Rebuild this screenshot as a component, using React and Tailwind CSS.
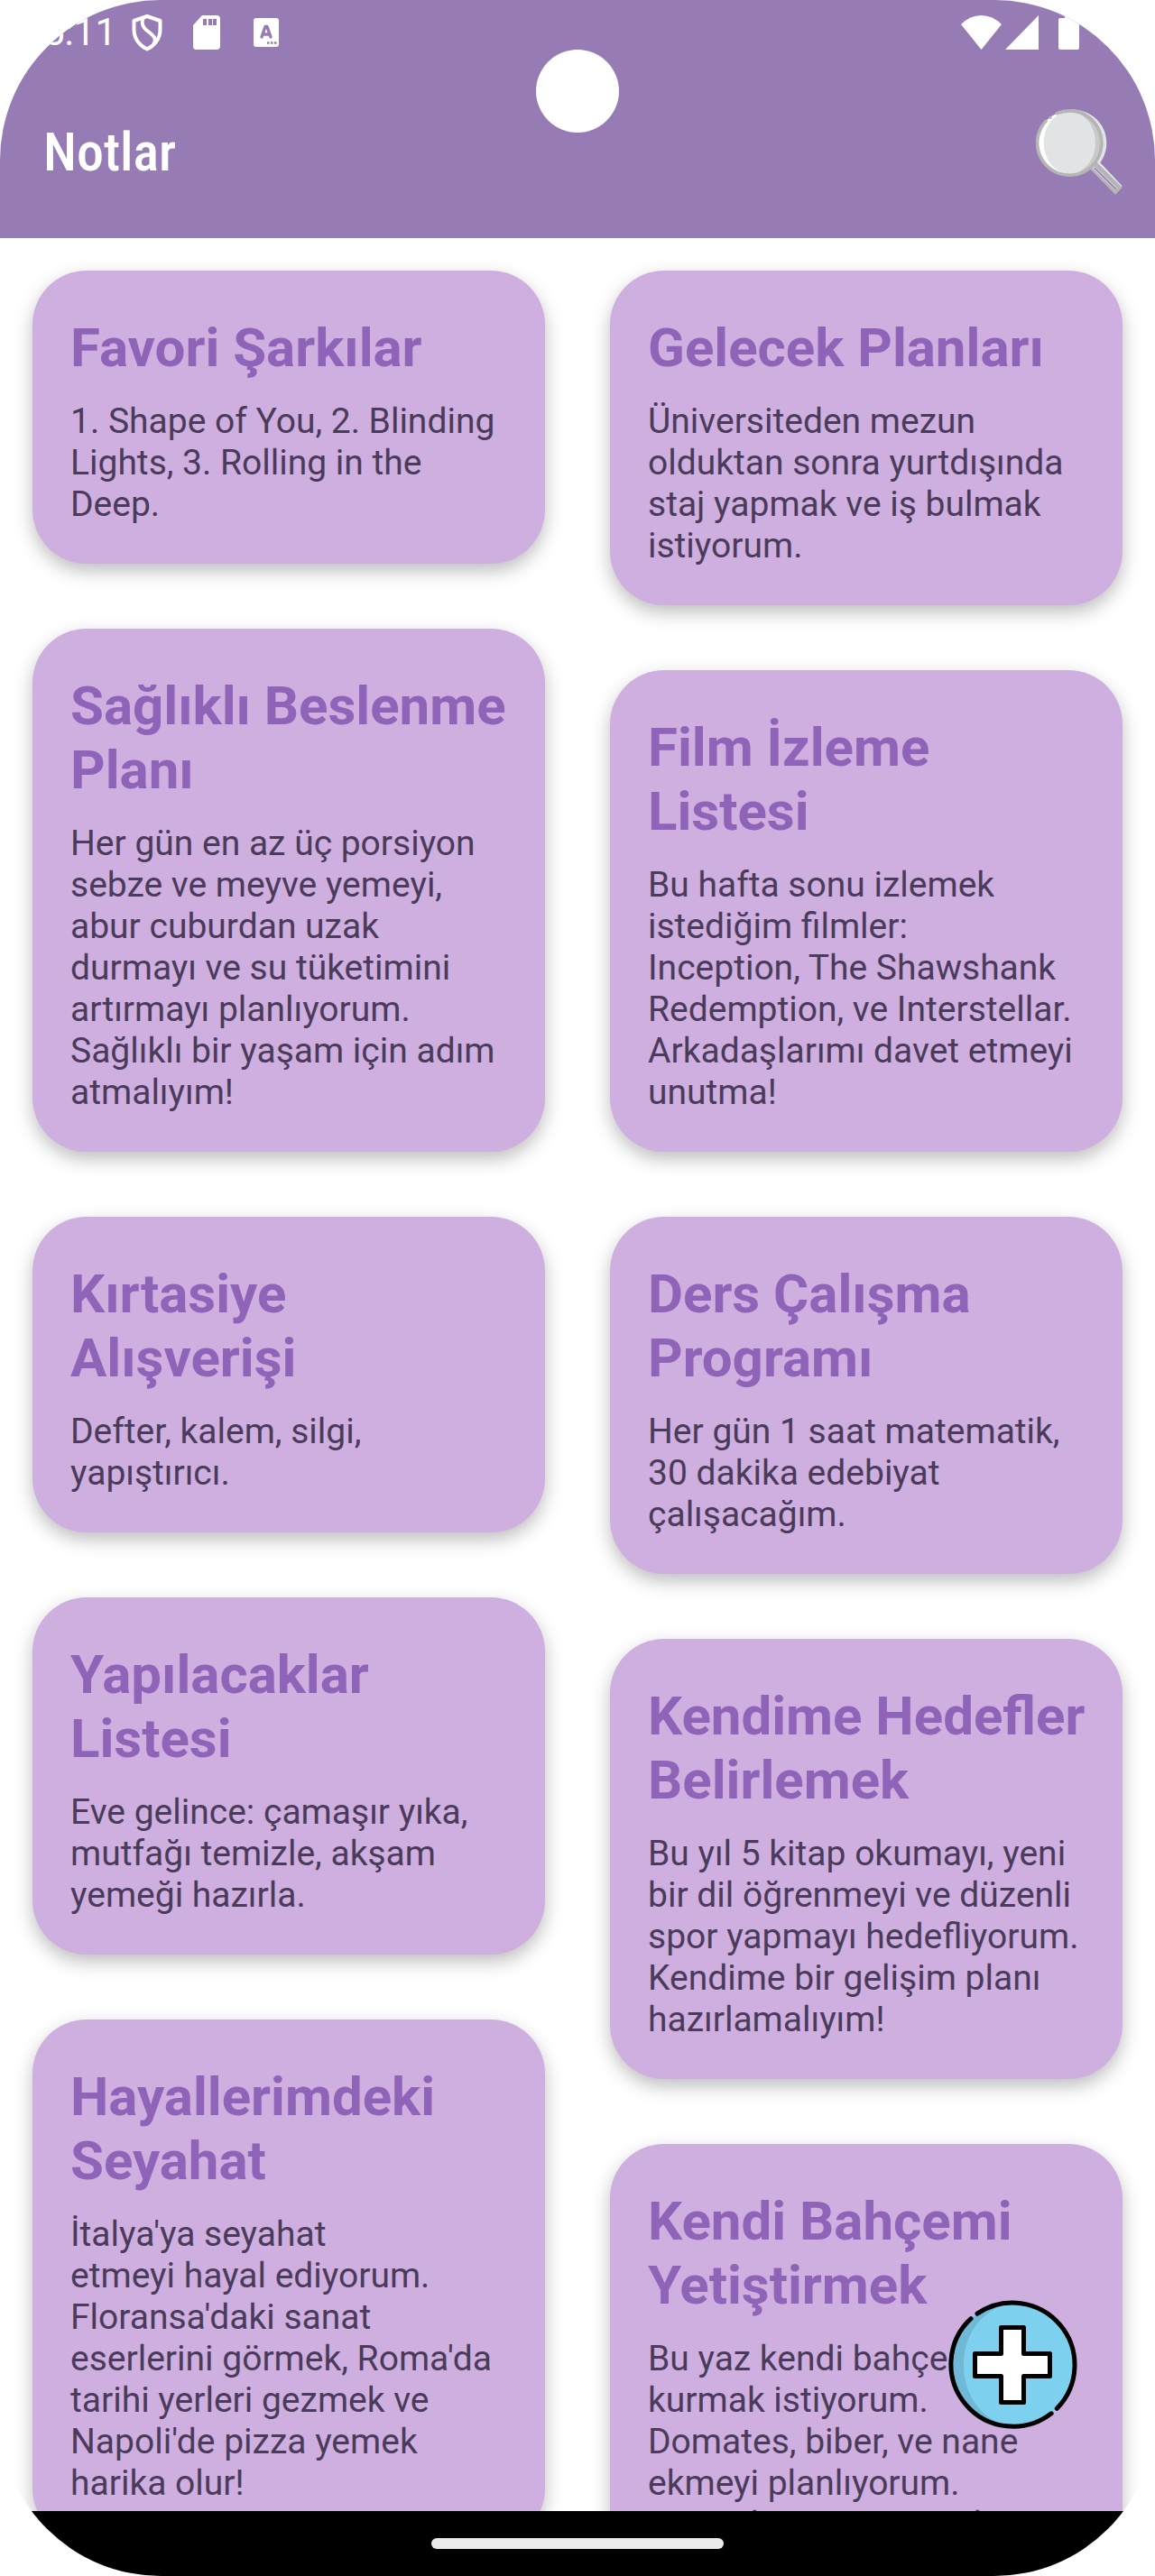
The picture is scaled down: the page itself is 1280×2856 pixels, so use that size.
const leftNotes = [
  { title: "Favori Şarkılar", lines: ["1. Shape of You, 2. Blinding Lights, 3. Rolling in the Deep."] },
  {
    title: "Sağlıklı Beslenme Planı",
    lines: [
      "Her gün en az üç porsiyon sebze ve meyve yemeyi, abur cuburdan uzak durmayı ve su tüketimini artırmayı planlıyorum. Sağlıklı bir yaşam için adım atmalıyım!",
    ],
  },
  { title: "Kırtasiye Alışverişi", lines: ["Defter, kalem, silgi, yapıştırıcı."] },
  { title: "Yapılacaklar Listesi", lines: ["Eve gelince: çamaşır yıka, mutfağı temizle, akşam yemeği hazırla."] },
  {
    title: "Hayallerimdeki Seyahat",
    lines: [
      "İtalya'ya seyahat",
      "etmeyi hayal ediyorum. Floransa'daki sanat eserlerini görmek, Roma'da tarihi yerleri gezmek ve Napoli'de pizza yemek harika olur!",
    ],
  },
];

const rightNotes = [
  { title: "Gelecek Planları", lines: ["Üniversiteden mezun olduktan sonra yurtdışında staj yapmak ve iş bulmak istiyorum."] },
  {
    title: "Film İzleme Listesi",
    lines: [
      "Bu hafta sonu izlemek istediğim filmler:",
      "Inception, The Shawshank Redemption, ve Interstellar. Arkadaşlarımı davet etmeyi unutma!",
    ],
  },
  { title: "Ders Çalışma Programı", lines: ["Her gün 1 saat matematik, 30 dakika edebiyat çalışacağım."] },
  {
    title: "Kendime Hedefler Belirlemek",
    lines: [
      "Bu yıl 5 kitap okumayı, yeni bir dil öğrenmeyi ve düzenli spor yapmayı hedefliyorum. Kendime bir gelişim planı hazırlamalıyım!",
    ],
  },
  {
    title: "Kendi Bahçemi Yetiştirmek",
    lines: [
      "Bu yaz kendi bahçemi kurmak istiyorum.",
      "Domates, biber, ve nane ekmeyi planlıyorum.",
      "Organik tarım yapmak istiyorum.",
    ],
  },
];

function NoteCard({ note }) {
  return (
    <article className="rounded-[60px] bg-[#ceafdf] pt-[50px] pr-[36px] pb-[43px] pl-[42px] shadow-[0_8px_20px_rgba(0,0,0,0.26)]">
      <h2 className="text-[60px] leading-[71px] font-bold text-[#8f64b8]">{note.title}</h2>
      <div className="mt-[23px] text-[39px] leading-[46px] text-[#4b3b5b]">
        {note.lines.map((line) => (
          <p key={line}>{line}</p>
        ))}
      </div>
    </article>
  );
}

function NoteColumn({ notes }) {
  return (
    <div className="flex min-w-0 flex-1 flex-col gap-[72px]">
      {notes.map((note) => (
        <NoteCard key={note.title} note={note} />
      ))}
    </div>
  );
}

function StatusBar() {
  return (
    <div className="flex h-[72px] items-center pr-[84px] pl-[48px] text-white">
      <span className="w-[76px] text-[42px] leading-[72px]">5:11</span>
      <svg className="ml-[22px] h-[42px] w-[34px]" viewBox="0 0 34 42" fill="none" stroke="currentColor" strokeWidth="4" aria-hidden="true">
        <path d="M17 3 L31.500 8 V18 C31.500 28 25 36 17 39.500 C9 36 2.500 28 2.500 18 V8 Z" strokeLinejoin="round" />
        <path d="M13 4 C10 11 12 15 17 19 C25 25 28 28 24 34" />
      </svg>
      <svg className="ml-[33px] h-[38px] w-[32px]" viewBox="0 0 32 38" fill="currentColor" aria-hidden="true">
        <path fillRule="evenodd" d="M11 0 H27 Q31 0 31 4 V34 Q31 38 27 38 H4 Q1 38 1 34 V11 Z M12 4 V11 H16 V4 Z M18 4 V11 H22 V4 Z M23 4 V11 H27 V4 Z" />
      </svg>
      <svg className="ml-[36px] h-[32px] w-[28px]" viewBox="0 0 28 32" aria-hidden="true">
        <rect width="28" height="32" rx="3" fill="currentColor" />
        <path d="M9 21 L13 9.500 H15 L19 21 M10.500 18 H17.500" fill="none" stroke="#977bb5" strokeWidth="3.4" strokeLinecap="round" strokeLinejoin="round" />
        <path d="M15 27.500 H17.500 M19 27.500 H21.500 M23 27.500 H25.500" stroke="#977bb5" strokeWidth="2.4" />
      </svg>
      <div className="ml-auto flex items-center">
        <svg className="h-[38px] w-[45px]" viewBox="0 0 45 38" fill="currentColor" aria-hidden="true">
          <path d="M0 10 Q10 0 22.500 0 Q35 0 45 10 L22.500 38 Z" />
        </svg>
        <svg className="ml-[4px] h-[38px] w-[37px]" viewBox="0 0 37 38" fill="currentColor" aria-hidden="true">
          <path d="M37 0 V38 H0 Z" />
        </svg>
        <svg className="ml-[22px] h-[38px] w-[23px]" viewBox="0 0 23 38" fill="currentColor" aria-hidden="true">
          <path d="M7 0 H16 V3 H21 Q23 3 23 5 V36 Q23 38 21 38 H2 Q0 38 0 36 V5 Q0 3 2 3 H7 Z" />
        </svg>
      </div>
    </div>
  );
}

function MagnifierIcon() {
  return (
    <svg className="size-[96px]" viewBox="84 62 288 288" fill="none" aria-hidden="true">
      <path d="M205 63 C270 66 319 112 319 174 C319 200 311 222 298 240 L371 318 L358 332 L270 250 Z" fill="#e1e3e5" />
      <circle cx="196" cy="174" r="107" fill="#fff" />
      <path d="M225 70 A107 107 0 0 1 225 278 Z" fill="#c9c9c9" />
      <ellipse cx="196" cy="174" rx="86" ry="104" fill="#e1e3e5" />
      <path d="M154 76 A107 107 0 1 1 117 102" stroke="#b5b5b5" strokeWidth="11" strokeLinecap="round" />
      <circle cx="132" cy="90" r="5" fill="#b5b5b5" />
      <path d="M268 258 L348 339 L364 323 L284 243 Z" fill="#b5b5b5" stroke="#b5b5b5" strokeWidth="10" />
      <path d="M276 256 L350 327" stroke="#dedfe1" strokeWidth="9" />
      <path d="M278 257 L350 328" stroke="#977bb5" strokeWidth="5" />
    </svg>
  );
}

function PlusIcon() {
  return (
    <svg className="size-[144px]" viewBox="0 0 144 144" fill="none" aria-hidden="true">
      <circle cx="72" cy="72" r="69" fill="#7dd1ee" />
      <path d="M72 3 A69 69 0 0 0 72 141 C40 135 18 108 18 72 C18 36 40 9 72 3 Z" fill="#70b9d6" />
      <path d="M33 15.100 A69 69 0 0 1 121.300 120.300" stroke="#000" strokeWidth="5" strokeLinecap="round" />
      <path d="M115.100 125.800 A69 69 0 0 1 26 20.600" stroke="#000" strokeWidth="5" strokeLinecap="round" />
      <path d="M59.500 30.500 H84.500 V59.500 H113.500 V84.500 H84.500 V113.500 H59.500 V84.500 H30.500 V59.500 H59.500 Z" fill="#fff" stroke="#000" strokeWidth="5" strokeLinejoin="round" />
    </svg>
  );
}

export default function App() {
  return (
    <div className="bg-white font-[Roboto,sans-serif]">
      <div className="relative flex h-screen flex-col overflow-hidden rounded-[178px] bg-white">
        <header className="h-[264px] shrink-0 bg-[#977bb5]">
          <StatusBar />
          <div className="flex items-center justify-between pt-[49px] pr-[36px] pl-[48px]">
            <h1 className="font-['Roboto_Condensed',Roboto,sans-serif] text-[60px] leading-[96px] font-medium text-white">Notlar</h1>
            <button type="button" aria-label="Ara">
              <MagnifierIcon />
            </button>
          </div>
        </header>
        <div className="absolute top-[55px] left-1/2 size-[92px] -translate-x-1/2 rounded-full bg-white" />
        <main className="flex min-h-0 flex-1 items-start gap-[72px] overflow-y-auto p-[36px] [scrollbar-width:none]">
          <NoteColumn notes={leftNotes} />
          <NoteColumn notes={rightNotes} />
        </main>
        <button type="button" aria-label="Not ekle" className="absolute right-[86px] bottom-[162px] rounded-full">
          <PlusIcon />
        </button>
        <footer className="flex h-[72px] shrink-0 items-center justify-center bg-black">
          <div className="h-[12px] w-[324px] rounded-full bg-[#ebebeb]" />
        </footer>
      </div>
    </div>
  );
}
